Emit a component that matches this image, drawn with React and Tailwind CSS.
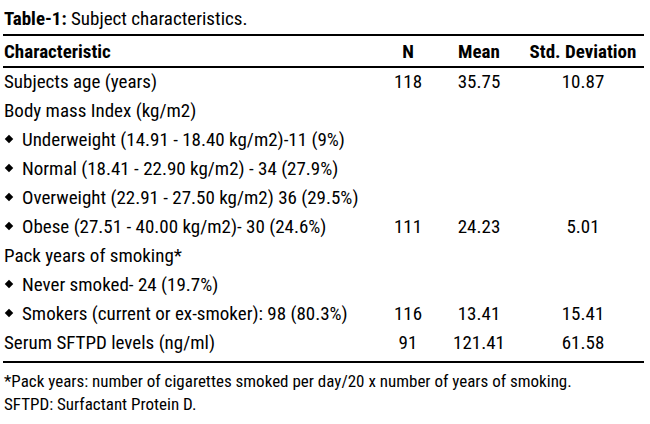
const rows = [
  { label: 'Subjects age (years)', n: '118', mean: '35.75', sd: '10.87' },
  { label: 'Body mass Index (kg/m2)' },
  { label: 'Underweight (14.91 - 18.40 kg/m2)-11 (9%)', bullet: true },
  { label: 'Normal (18.41 - 22.90 kg/m2) - 34 (27.9%)', bullet: true },
  { label: 'Overweight (22.91 - 27.50 kg/m2) 36 (29.5%)', bullet: true },
  { label: 'Obese (27.51 - 40.00 kg/m2)- 30 (24.6%)', bullet: true, n: '111', mean: '24.23', sd: '5.01' },
  { label: 'Pack years of smoking*' },
  { label: 'Never smoked- 24 (19.7%)', bullet: true },
  { label: 'Smokers (current or ex-smoker): 98 (80.3%)', bullet: true, n: '116', mean: '13.41', sd: '15.41' },
  { label: 'Serum SFTPD levels (ng/ml)', n: '91', mean: '121.41', sd: '61.58' },
]

function Row({ label, bullet, n, mean, sd }) {
  return (
    <div className="grid grid-cols-[377px_56px_86px_122px] leading-[29px]">
      <div className="flex items-center pl-px whitespace-nowrap">
        {bullet && (
          <span className="inline-block w-[6px] h-[6px] bg-black rotate-45 ml-[2px] mr-[10px] -mt-[2px]" />
        )}
        {label}
      </div>
      <div className="text-center">{n}</div>
      <div className="text-center">{mean}</div>
      <div className="text-center">{sd}</div>
    </div>
  )
}

export default function App() {
  return (
    <div
      className="w-[650px] h-[424px] bg-white text-black pt-1 pl-[3px]"
      style={{ fontFamily: '"Roboto Condensed", "Liberation Sans", sans-serif' }}
    >
      <div className="w-[641px] text-[19px]">
        <p className="leading-[29px] pl-px mb-px">
          <span className="font-bold">Table-1:</span> Subject characteristics.
        </p>

        <div className="border-t-2 border-b-2 border-black h-[34px] font-bold">
          <div className="grid grid-cols-[377px_56px_86px_122px] leading-[29px] pt-px">
            <div className="pl-px">Characteristic</div>
            <div className="text-center">N</div>
            <div className="text-center">Mean</div>
            <div className="text-center">Std. Deviation</div>
          </div>
        </div>

        <div className="-mt-px pb-1 border-b-2 border-black">
          {rows.map((r, i) => (
            <Row key={i} {...r} />
          ))}
        </div>

        <div className="text-[17px] leading-[23px] pt-[7px] pl-px">
          <p>*Pack years: number of cigarettes smoked per day/20 x number of years of smoking.</p>
          <p>SFTPD: Surfactant Protein D.</p>
        </div>
      </div>
    </div>
  )
}
